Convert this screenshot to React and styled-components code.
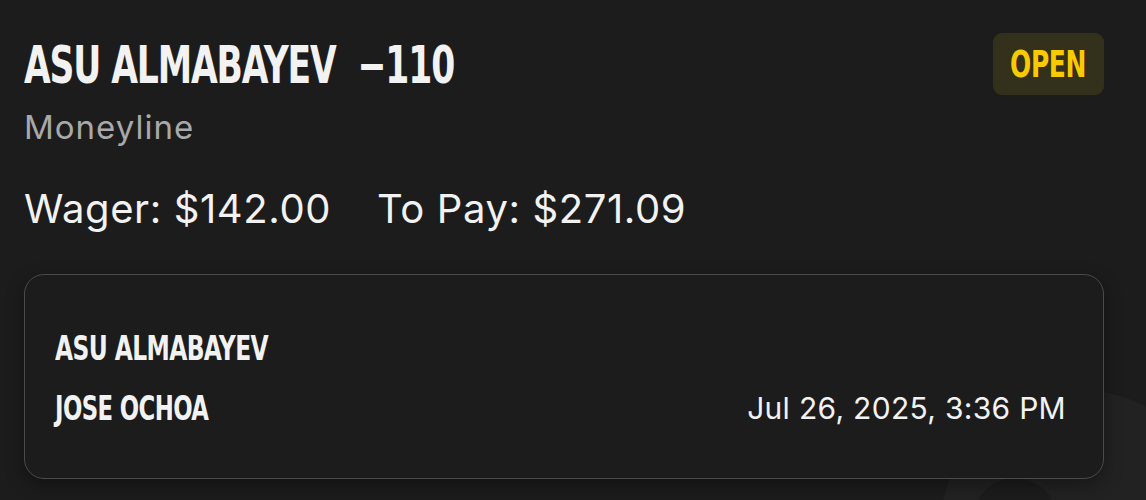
import React from "react";
import styled, { createGlobalStyle } from "styled-components";

const colors = {
  page: "#1c1c1c",
  text: "#f2f2f2",
  muted: "#a9a9a9",
  border: "#4b4b4b",
  badgeBg: "#33301b",
  badgeText: "#f6cb00",
  mark: "#222222",
};

const condensed = `"Liberation Sans Narrow", "DejaVu Sans Condensed", "DejaVu Sans", sans-serif`;

const GlobalStyle = createGlobalStyle`
  html, body {
    margin: 0;
    background: ${colors.page};
  }
  body {
    font-family: Inter, "Noto Sans", sans-serif;
    color: ${colors.text};
    overflow: hidden;
  }
`;

export default function App() {
  return (
    <>
      <GlobalStyle />
      <Page>
        {/* faint brand mark peeking out behind the card */}
        <Watermark viewBox="0 0 260 120" width="260" height="120">
          <path
            fillRule="evenodd"
            d="M54 150 a140 140 0 1 0 280 0 a140 140 0 1 0 -280 0 Z M87 140 a42 42 0 1 0 84 0 a42 42 0 1 0 -84 0 Z"
            fill={colors.mark}
          />
        </Watermark>
        <Content>
          <Header>
            <TitleBlock>
              <Title>
                <Squeeze $scale={0.738}>ASU ALMABAYEV&nbsp;&nbsp;−110</Squeeze>
              </Title>
              <Market>Moneyline</Market>
            </TitleBlock>
            <Badge>
              <Squeeze $scale={0.73} $origin="center">OPEN</Squeeze>
            </Badge>
          </Header>
          <Amounts>
            <span>Wager: $142.00</span>
            <span>To Pay: $271.09</span>
          </Amounts>
          <Card>
            <Fighters>
              <Fighter>
                <Squeeze $scale={0.765}>ASU ALMABAYEV</Squeeze>
              </Fighter>
              <Fighter>
                <Squeeze $scale={0.745}>JOSE OCHOA</Squeeze>
              </Fighter>
            </Fighters>
            <DateText>Jul 26, 2025, 3:36 PM</DateText>
          </Card>
        </Content>
      </Page>
    </>
  );
}

const Page = styled.div`
  position: relative;
  width: 1146px;
  height: 500px;
  overflow: hidden;
`;

const Watermark = styled.svg`
  position: absolute;
  right: 0;
  bottom: 0;
`;

const Squeeze = styled.span`
  display: inline-block;
  white-space: nowrap;
  transform: scaleX(${(p) => p.$scale});
  transform-origin: ${(p) => p.$origin || "left"} center;
`;

const Content = styled.div`
  position: relative;
  width: 1080px;
  padding: 33px 0 0 24px;
  display: flex;
  flex-direction: column;
`;

const Header = styled.div`
  display: flex;
  justify-content: space-between;
  align-items: flex-start;
`;

const TitleBlock = styled.div`
  display: flex;
  flex-direction: column;
`;

const Title = styled.h1`
  margin: 0;
  font-family: ${condensed};
  font-weight: 700;
  font-size: 52px;
  line-height: 64px;
  letter-spacing: -1.5px;
  color: ${colors.text};
`;

const Market = styled.div`
  margin-top: 10px;
  font-size: 33px;
  line-height: 40px;
  letter-spacing: 1px;
  color: ${colors.muted};
`;

const Badge = styled.div`
  width: 111px;
  height: 62px;
  border-radius: 9px;
  background: ${colors.badgeBg};
  color: ${colors.badgeText};
  display: flex;
  align-items: center;
  justify-content: center;
  font-family: ${condensed};
  font-weight: 700;
  font-size: 38px;
  letter-spacing: -0.5px;
`;

const Amounts = styled.div`
  display: flex;
  gap: 46px;
  margin-top: 38px;
  font-size: 40px;
  line-height: 48px;
  letter-spacing: 0.6px;
  color: ${colors.text};
`;

const Card = styled.div`
  margin-top: 41px;
  height: 205px;
  box-sizing: border-box;
  border: 1.5px solid ${colors.border};
  border-radius: 20px;
  background: ${colors.page};
  box-shadow: 0 6px 18px rgba(0, 0, 0, 0.35);
  display: flex;
  justify-content: space-between;
  align-items: flex-end;
  padding: 0 37px 52px 30px;
`;

const Fighters = styled.div`
  display: flex;
  flex-direction: column;
  gap: 25px;
`;

const Fighter = styled.div`
  font-family: ${condensed};
  font-weight: 700;
  font-size: 34px;
  line-height: 35px;
  letter-spacing: -0.8px;
  color: ${colors.text};
`;

const DateText = styled.div`
  font-size: 30px;
  line-height: 35px;
  letter-spacing: 0.3px;
  color: ${colors.text};
`;
